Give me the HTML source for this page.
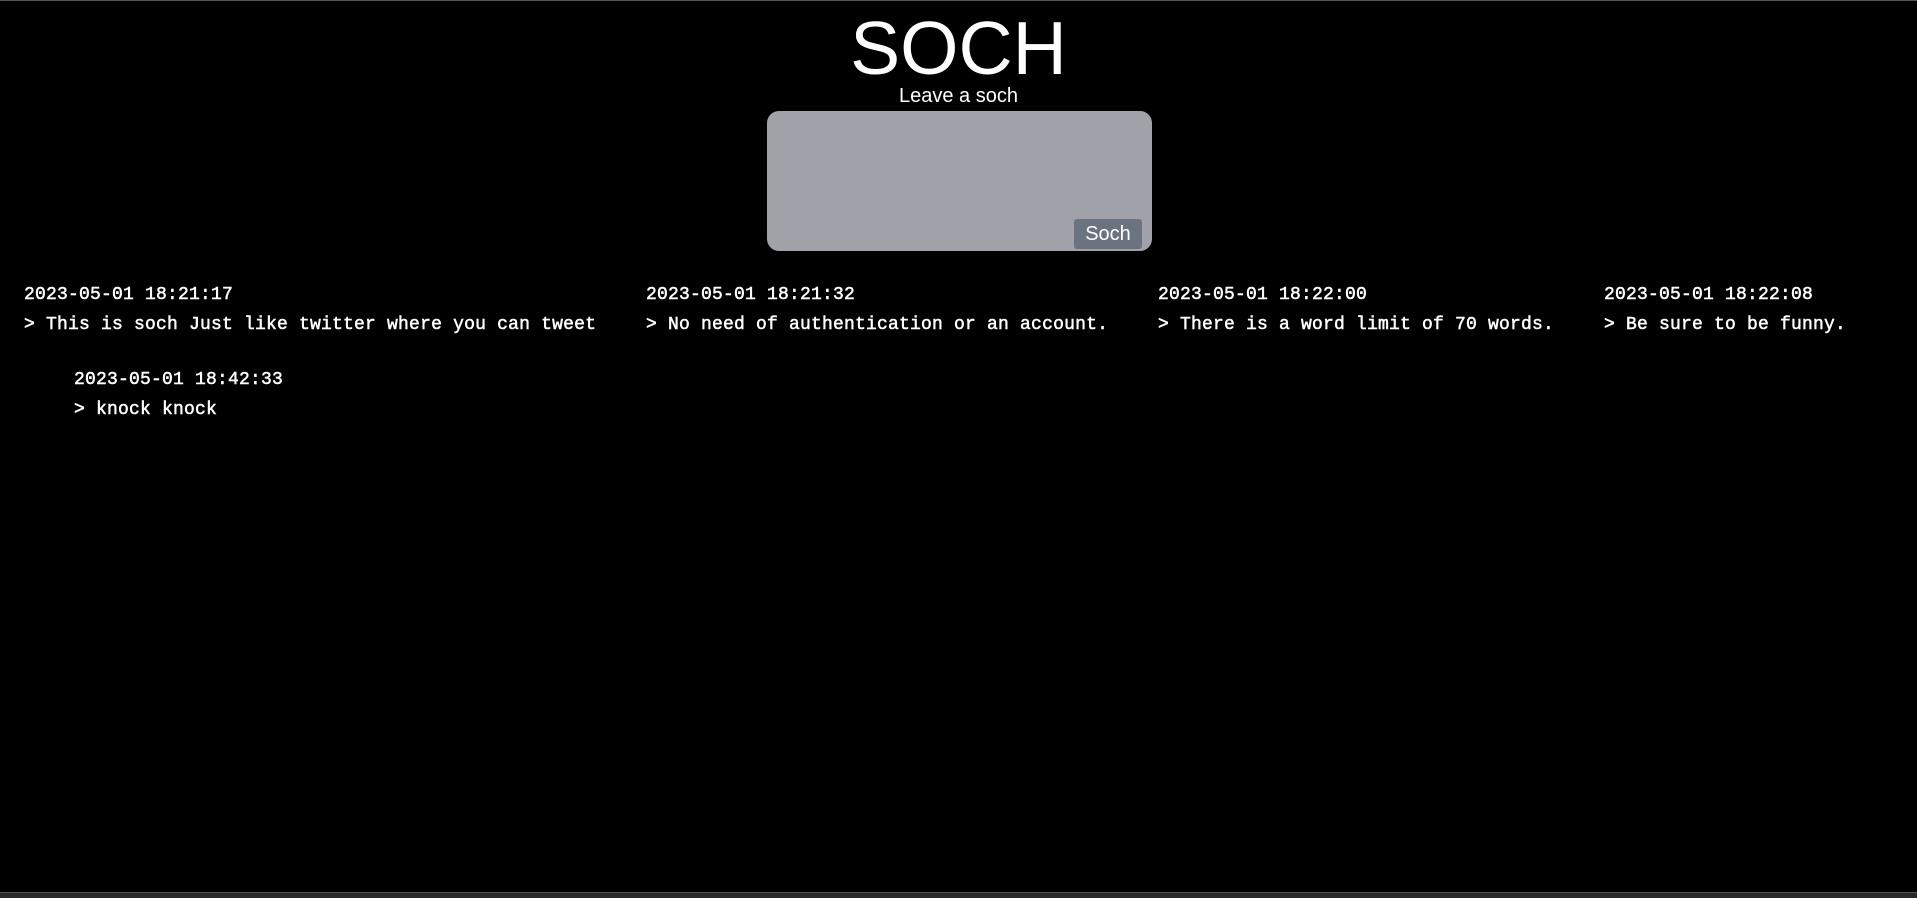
<!DOCTYPE html>
<html><head><meta charset="utf-8"><style>
html,body{margin:0;padding:0;background:#000;width:1917px;height:898px;overflow:hidden;position:relative;color:#fff}
.top{position:absolute;left:0;top:0;width:100%;height:1px;background:#555}
.bot{position:absolute;left:0;top:892px;width:100%;height:6px;background:#2a2a2a;border-top:1px solid #555}
h1{position:absolute;left:0;width:100%;top:4px;margin:0;text-align:center;font:400 75px/88px "Liberation Sans",sans-serif}
.sub{position:absolute;left:0;width:100%;top:84px;text-align:center;font:400 20px/24px "Liberation Sans",sans-serif}
.ta{position:absolute;left:767px;top:111px;width:385px;height:140px;background:#a1a1aa;border-radius:12px}
.btn{position:absolute;left:1074px;top:219px;width:68px;height:30px;background:#6b7280;border-radius:3px;color:#fff;text-align:center;font:400 20px/30px "Liberation Sans",sans-serif}
.e{position:absolute;font:400 18px/30px "Liberation Mono",monospace;letter-spacing:0.2px;white-space:pre;-webkit-text-stroke:0.5px #fff}
</style></head><body>
<div class="top"></div>
<h1>SOCH</h1>
<div class="sub">Leave a soch</div>
<div class="ta"></div>
<div class="btn">Soch</div>
<div class="e" style="left:24px;top:280px">2023-05-01 18:21:17<br>&gt; This is soch Just like twitter where you can tweet</div>
<div class="e" style="left:646px;top:280px">2023-05-01 18:21:32<br>&gt; No need of authentication or an account.</div>
<div class="e" style="left:1158px;top:280px">2023-05-01 18:22:00<br>&gt; There is a word limit of 70 words.</div>
<div class="e" style="left:1604px;top:280px">2023-05-01 18:22:08<br>&gt; Be sure to be funny.</div>
<div class="e" style="left:74px;top:365px">2023-05-01 18:42:33<br>&gt; knock knock</div>
<div class="bot"></div>
</body></html>
